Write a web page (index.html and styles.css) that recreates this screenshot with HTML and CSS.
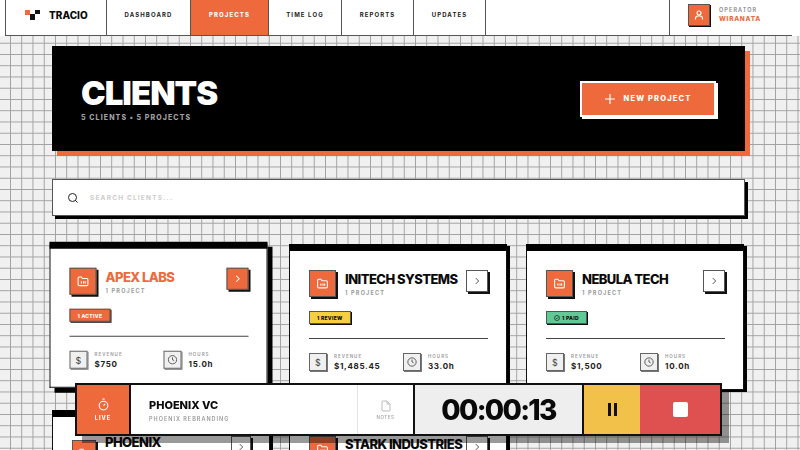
FILE: index.html
```html
<!DOCTYPE html>
<html lang="en">
<head>
  <meta charset="UTF-8" />
  <title>Tracio - Projects</title>
  <link rel="stylesheet" href="styles.css">
</head>
<body>
  <header class="topbar">
    <div class="brand">
      <svg class="brand-mark" width="15" height="10" viewBox="0 0 15 10">
        <rect x="0" y="0" width="5" height="5" fill="#ee6a3c"/>
        <rect x="5" y="4" width="5" height="6" fill="#111"/>
        <rect x="10" y="0" width="5" height="4" fill="#111"/>
      </svg>
      <span>TRACIO</span>
    </div>
    <nav class="nav">
      <a class="nav-item nav-dashboard">DASHBOARD</a>
      <a class="nav-item nav-projects active">PROJECTS</a>
      <a class="nav-item nav-timelog">TIME LOG</a>
      <a class="nav-item nav-reports">REPORTS</a>
      <a class="nav-item nav-updates">UPDATES</a>
    </nav>
    <div class="topbar-space"></div>
    <div class="operator">
      <div class="operator-icon">
        <svg width="12" height="12" viewBox="0 0 24 24" fill="none" stroke="#fff" stroke-width="2.2"><circle cx="12" cy="8" r="4"/><path d="M5 21v-2a5 5 0 0 1 5-5h4a5 5 0 0 1 5 5v2"/></svg>
      </div>
      <div>
        <div class="operator-label">OPERATOR</div>
        <div class="operator-name">WIRANATA</div>
      </div>
    </div>
  </header>

  <main class="content">
    <section class="hero">
      <div>
        <h1>CLIENTS</h1>
        <p>5 CLIENTS • 5 PROJECTS</p>
      </div>
      <button class="new-btn">
        <svg width="10" height="10" viewBox="0 0 10 10" stroke="#fff" stroke-width="1.2"><path d="M5 0v10M0 5h10"/></svg>
        NEW PROJECT
      </button>
    </section>

    <div class="search">
      <svg width="12" height="12" viewBox="0 0 24 24" fill="none" stroke="#222" stroke-width="2"><circle cx="11" cy="11" r="8"/><path d="M21 21l-4.300-4.300"/></svg>
      <span>SEARCH CLIENTS...</span>
    </div>

    <div class="cards">
      <article class="card card-hover">
        <div class="card-head">
          <div class="card-left">
            <div class="folder">
              <svg width="13" height="13" viewBox="0 0 24 24" fill="none" stroke="#fff" stroke-width="2"><path d="M3 6a2 2 0 0 1 2-2h4l2 3h8a2 2 0 0 1 2 2v9a2 2 0 0 1-2 2H5a2 2 0 0 1-2-2z"/><path d="M9 12v4M13 12v4M16 12v4"/></svg>
            </div>
            <div class="card-title">
              <h2 class="orange">APEX LABS</h2>
              <div class="sub">1 PROJECT</div>
            </div>
          </div>
          <div class="go go-orange"><svg width="10" height="10" viewBox="0 0 24 24" fill="none" stroke="#fff" stroke-width="2.500"><path d="M9 5l7 7-7 7"/></svg></div>
        </div>
        <span class="badge badge-active">1 ACTIVE</span>
        <div class="stats">
          <div class="stat">
            <div class="stat-icon">$</div>
            <div><div class="stat-label">REVENUE</div><div class="stat-value">$750</div></div>
          </div>
          <div class="stat">
            <div class="stat-icon"><svg width="10" height="10" viewBox="0 0 24 24" fill="none" stroke="#444" stroke-width="2"><circle cx="12" cy="12" r="10"/><path d="M12 6v6l4 2"/></svg></div>
            <div><div class="stat-label">HOURS</div><div class="stat-value">15.0h</div></div>
          </div>
        </div>
      </article>

      <article class="card">
        <div class="card-head">
          <div class="card-left">
            <div class="folder">
              <svg width="13" height="13" viewBox="0 0 24 24" fill="none" stroke="#fff" stroke-width="2"><path d="M3 6a2 2 0 0 1 2-2h4l2 3h8a2 2 0 0 1 2 2v9a2 2 0 0 1-2 2H5a2 2 0 0 1-2-2z"/><path d="M9 12v4M13 12v4M16 12v4"/></svg>
            </div>
            <div class="card-title">
              <h2>INITECH SYSTEMS</h2>
              <div class="sub">1 PROJECT</div>
            </div>
          </div>
          <div class="go"><svg width="10" height="10" viewBox="0 0 24 24" fill="none" stroke="#333" stroke-width="2"><path d="M9 5l7 7-7 7"/></svg></div>
        </div>
        <span class="badge badge-review">1 REVIEW</span>
        <div class="stats">
          <div class="stat">
            <div class="stat-icon">$</div>
            <div><div class="stat-label">REVENUE</div><div class="stat-value">$1,485.45</div></div>
          </div>
          <div class="stat">
            <div class="stat-icon"><svg width="10" height="10" viewBox="0 0 24 24" fill="none" stroke="#444" stroke-width="2"><circle cx="12" cy="12" r="10"/><path d="M12 6v6l4 2"/></svg></div>
            <div><div class="stat-label">HOURS</div><div class="stat-value">33.0h</div></div>
          </div>
        </div>
      </article>

      <article class="card">
        <div class="card-head">
          <div class="card-left">
            <div class="folder">
              <svg width="13" height="13" viewBox="0 0 24 24" fill="none" stroke="#fff" stroke-width="2"><path d="M3 6a2 2 0 0 1 2-2h4l2 3h8a2 2 0 0 1 2 2v9a2 2 0 0 1-2 2H5a2 2 0 0 1-2-2z"/><path d="M9 12v4M13 12v4M16 12v4"/></svg>
            </div>
            <div class="card-title">
              <h2>NEBULA TECH</h2>
              <div class="sub">1 PROJECT</div>
            </div>
          </div>
          <div class="go"><svg width="10" height="10" viewBox="0 0 24 24" fill="none" stroke="#333" stroke-width="2"><path d="M9 5l7 7-7 7"/></svg></div>
        </div>
        <span class="badge badge-paid"><svg width="6" height="6" viewBox="0 0 24 24" fill="none" stroke="#111" stroke-width="2.500"><circle cx="12" cy="12" r="10"/><path d="M8 12l3 3 5-6"/></svg>1 PAID</span>
        <div class="stats">
          <div class="stat">
            <div class="stat-icon">$</div>
            <div><div class="stat-label">REVENUE</div><div class="stat-value">$1,500</div></div>
          </div>
          <div class="stat">
            <div class="stat-icon"><svg width="10" height="10" viewBox="0 0 24 24" fill="none" stroke="#444" stroke-width="2"><circle cx="12" cy="12" r="10"/><path d="M12 6v6l4 2"/></svg></div>
            <div><div class="stat-label">HOURS</div><div class="stat-value">10.0h</div></div>
          </div>
        </div>
      </article>

      <article class="card card-cut card-phoenix">
        <div class="card-head">
          <div class="card-left">
            <div class="folder">
              <svg width="13" height="13" viewBox="0 0 24 24" fill="none" stroke="#fff" stroke-width="2"><path d="M3 6a2 2 0 0 1 2-2h4l2 3h8a2 2 0 0 1 2 2v9a2 2 0 0 1-2 2H5a2 2 0 0 1-2-2z"/><path d="M9 12v4M13 12v4M16 12v4"/></svg>
            </div>
            <div class="card-title">
              <h2>PHOENIX</h2>
            </div>
          </div>
          <div class="go"><svg width="10" height="10" viewBox="0 0 24 24" fill="none" stroke="#333" stroke-width="2"><path d="M9 5l7 7-7 7"/></svg></div>
        </div>
      </article>

      <article class="card card-cut">
        <div class="card-head">
          <div class="card-left">
            <div class="folder">
              <svg width="13" height="13" viewBox="0 0 24 24" fill="none" stroke="#fff" stroke-width="2"><path d="M3 6a2 2 0 0 1 2-2h4l2 3h8a2 2 0 0 1 2 2v9a2 2 0 0 1-2 2H5a2 2 0 0 1-2-2z"/><path d="M9 12v4M13 12v4M16 12v4"/></svg>
            </div>
            <div class="card-title">
              <h2>STARK INDUSTRIES</h2>
            </div>
          </div>
          <div class="go"><svg width="10" height="10" viewBox="0 0 24 24" fill="none" stroke="#333" stroke-width="2"><path d="M9 5l7 7-7 7"/></svg></div>
        </div>
      </article>
    </div>
  </main>

  <div class="timer">
    <div class="timer-live">
      <svg width="13" height="13" viewBox="0 0 24 24" fill="none" stroke="#fff" stroke-width="2"><circle cx="12" cy="14" r="8"/><path d="M10 2h4M12 14l3-3"/></svg>
      <span>LIVE</span>
    </div>
    <div class="timer-info">
      <div class="timer-client">PHOENIX VC</div>
      <div class="timer-project">PHOENIX REBRANDING</div>
    </div>
    <div class="timer-notes">
      <svg width="12" height="12" viewBox="0 0 24 24" fill="none" stroke="#bbb" stroke-width="2"><path d="M14 2H6a2 2 0 0 0-2 2v16a2 2 0 0 0 2 2h12a2 2 0 0 0 2-2V8z"/><path d="M14 2v6h6"/></svg>
      <span>NOTES</span>
    </div>
    <div class="timer-clock">00:00:13</div>
    <div class="timer-pause"><i></i><i></i></div>
    <div class="timer-stop"><b></b></div>
  </div>
</body>
</html>
```

FILE: styles.css
```css
* {
  box-sizing: border-box;
}

html, body {
  height: 450px;
  overflow: hidden;
}

body {
  margin: 0;
  font-family: Inter, "Liberation Sans", sans-serif;
  color: #0a0a0a;
  background-color: #f0f0f0;
  background-image:
    linear-gradient(#a0a0a0 1px, transparent 1px),
    linear-gradient(90deg, #a0a0a0 1px, transparent 1px);
  background-size: 11.25px 11.25px;
  background-position: 10px 9px;
}

.topbar {
  display: flex;
  height: 36px;
  padding: 0 8px 0 5px;
  background: #fff;
}

.brand {
  width: 102px;
  display: flex;
  align-items: center;
  gap: 9px;
  padding: 0 0 6px 19px;
  font-size: 10px;
  font-weight: 800;
  border-left: 1px solid #555;
  border-bottom: 1px solid #555;
  border-right: 1px solid #555;
}

.nav {
  display: flex;
  border-bottom: 1px solid #555;
}

.nav-item {
  display: flex;
  align-items: center;
  justify-content: center;
  padding-bottom: 6px;
  font-size: 6px;
  font-weight: 700;
  letter-spacing: 1.1px;
  color: #222;
  border-right: 1px solid #555;
}

.nav-dashboard { width: 84px; }
.nav-projects { width: 78px; }
.nav-timelog { width: 73px; }
.nav-reports { width: 72px; }
.nav-updates { width: 72px; }

.nav-item.active {
  background: #ee6a3c;
  color: #fff;
  font-weight: 800;
}

.topbar-space {
  flex: 1;
  border-bottom: 1px solid #555;
}

.operator {
  width: 123px;
  display: flex;
  align-items: center;
  gap: 9px;
  padding: 0 0 6px 18px;
  border-left: 1px solid #555;
  border-bottom: 1px solid #555;
}

.operator-icon {
  width: 22px;
  height: 22px;
  background: #ee6a3c;
  border: 1px solid #555;
  box-shadow: 1px 1px 0 #111;
  display: flex;
  align-items: center;
  justify-content: center;
}

.operator-label {
  font-size: 5.500px;
  font-weight: 600;
  letter-spacing: 1.100px;
  color: #888;
}

.operator-name {
  font-size: 6.500px;
  font-weight: 800;
  letter-spacing: 0.700px;
  color: #ee6a3c;
  margin-top: 2px;
}

.content {
  height: 414px;
  overflow: hidden;
  padding: 10px 55px 0 52px;
}

.hero {
  height: 105px;
  background: #000;
  box-shadow: 5px 5px 0 #ee6a3c;
  display: flex;
  align-items: center;
  justify-content: space-between;
  padding: 0 29px;
  color: #fff;
}

.hero h1 {
  margin: 0;
  font-size: 33px;
  font-weight: 900;
  letter-spacing: -1px;
  line-height: 36px;
}

.hero p {
  margin: 2px 0 0;
  font-size: 7px;
  font-weight: 800;
  letter-spacing: 1.100px;
  color: #a0a0a0;
}

.new-btn {
  width: 136px;
  height: 36px;
  display: flex;
  align-items: center;
  justify-content: center;
  gap: 9px;
  background: #ee6a3c;
  border: 2px solid #fff;
  box-shadow: 2px 2px 0 #fff;
  color: #fff;
  font-family: inherit;
  font-size: 7.500px;
  font-weight: 800;
  letter-spacing: 1.150px;
}

.search {
  height: 37px;
  margin-top: 28px;
  background: #fff;
  border: 1px solid #555;
  box-shadow: 3px 3px 0 #000;
  display: flex;
  align-items: center;
  gap: 11px;
  padding-left: 14px;
  font-size: 6.500px;
  font-weight: 700;
  letter-spacing: 1.200px;
  color: #ccc;
}

.cards {
  display: grid;
  grid-template-columns: repeat(3, 217.500px);
  grid-auto-rows: 145.500px;
  column-gap: 19.500px;
  row-gap: 20px;
  margin: 28px -3px 0 0;
}

.card {
  background: #fff;
  border: 1px solid #111;
  border-top: 7px solid #000;
  box-shadow: 3px 2px 0 #000;
  padding: 19px 18px 0 19px;
}

/* card 1 esta em hover */
.card-hover {
  transform: translate(-2.500px, -2.250px);
  box-shadow: 5px 5px 0 #000;
}

.card-head {
  display: flex;
  align-items: flex-start;
  justify-content: space-between;
  height: 27px;
}

.card-left {
  display: flex;
  align-items: center;
  gap: 9px;
}

.folder {
  width: 27px;
  height: 27px;
  flex: none;
  background: #ee6a3c;
  border: 1px solid #555;
  box-shadow: 2px 2px 0 #111;
  display: flex;
  align-items: center;
  justify-content: center;
}

.card-title h2 {
  margin: 0;
  font-size: 13px;
  font-weight: 800;
  letter-spacing: -0.550px;
  line-height: 15px;
  white-space: nowrap;
}

.card-title h2.orange {
  color: #ee6a3c;
}

.sub {
  margin-top: 3px;
  font-size: 5.500px;
  font-weight: 700;
  letter-spacing: 1.200px;
  color: #999;
}

/* cards da segunda linha, cortados pela borda da tela */
.card-cut .card-left {
  align-items: flex-start;
}

.card-cut .card-title h2 {
  margin-top: 1px;
}

.card-phoenix .folder {
  width: 24px;
  margin-top: 4.500px;
}

.card-phoenix .card-title h2 {
  margin-top: -1px;
}

.card-phoenix .go {
  width: 20px;
}

.go {
  width: 22px;
  height: 22px;
  flex: none;
  background: #fff;
  border: 1px solid #555;
  box-shadow: 2px 2px 0 #111;
  display: flex;
  align-items: center;
  justify-content: center;
}

.go-orange {
  background: #ee6a3c;
}

.badge {
  display: inline-flex;
  align-items: center;
  gap: 2px;
  height: 13px;
  margin-top: 14px;
  padding: 0 7px;
  font-size: 5px;
  font-weight: 800;
  letter-spacing: 0.300px;
  border: 1px solid #555;
  box-shadow: 1px 1px 0 #111;
  vertical-align: top;
}

.badge-active { background: #ee6a3c; color: #fff; }
.badge-review { background: #f5cf3f; }
.badge-paid { background: #5fca95; }

.stats {
  display: grid;
  grid-template-columns: 94px 1fr;
  margin-top: 14px;
  padding-top: 14px;
  border-top: 1px solid #444;
}

.stat {
  display: flex;
  align-items: center;
  gap: 7px;
}

.stat-icon {
  width: 18px;
  height: 18px;
  background: #f0f0f0;
  border: 1px solid #666;
  box-shadow: 1px 1px 0 #777;
  display: flex;
  align-items: center;
  justify-content: center;
  font-size: 9px;
  color: #444;
}

.stat-label {
  font-size: 4.500px;
  font-weight: 600;
  letter-spacing: 1px;
  color: #999;
}

.stat-value {
  margin-top: 2px;
  font-size: 8px;
  font-weight: 700;
  letter-spacing: 0.700px;
  color: #222;
}

/* barra do timer por cima dos cards */
.timer {
  position: fixed;
  left: 75px;
  top: 383px;
  width: 647px;
  height: 53px;
  display: flex;
  background: #fff;
  border: 2px solid #111;
  box-shadow: 7px 7px 0 rgba(0, 0, 0, 0.4);
}

.timer-live {
  width: 54px;
  background: #ee6a3c;
  border-right: 2px solid #111;
  color: #fff;
  display: flex;
  flex-direction: column;
  align-items: center;
  justify-content: center;
  gap: 4px;
  font-size: 5.500px;
  font-weight: 800;
  letter-spacing: 1px;
}

.timer-info {
  width: 226px;
  padding: 13px 0 0 18px;
}

.timer-client {
  font-size: 11px;
  font-weight: 800;
}

.timer-project {
  margin-top: 4px;
  font-size: 5.500px;
  font-weight: 600;
  letter-spacing: 1px;
  color: #999;
}

.timer-notes {
  width: 56px;
  border-left: 1px solid #e4e4e4;
  display: flex;
  flex-direction: column;
  align-items: center;
  justify-content: center;
  gap: 3px;
  font-size: 4.500px;
  font-weight: 600;
  letter-spacing: 0.500px;
  color: #aaa;
}

.timer-clock {
  width: 171px;
  background: #eee;
  border-left: 2px solid #111;
  border-right: 2px solid #111;
  display: flex;
  align-items: center;
  justify-content: center;
  font-size: 28px;
  font-weight: 800;
  letter-spacing: -1.700px;
}

.timer-pause {
  width: 56px;
  background: #f2c14a;
  display: flex;
  align-items: center;
  justify-content: center;
  gap: 3px;
}

.timer-pause i {
  width: 3px;
  height: 13px;
  background: #111;
}

.timer-stop {
  flex: 1;
  background: #df5050;
  display: flex;
  align-items: center;
  justify-content: center;
}

.timer-stop b {
  width: 15px;
  height: 15px;
  background: #fff;
  border-radius: 2px;
}
```
